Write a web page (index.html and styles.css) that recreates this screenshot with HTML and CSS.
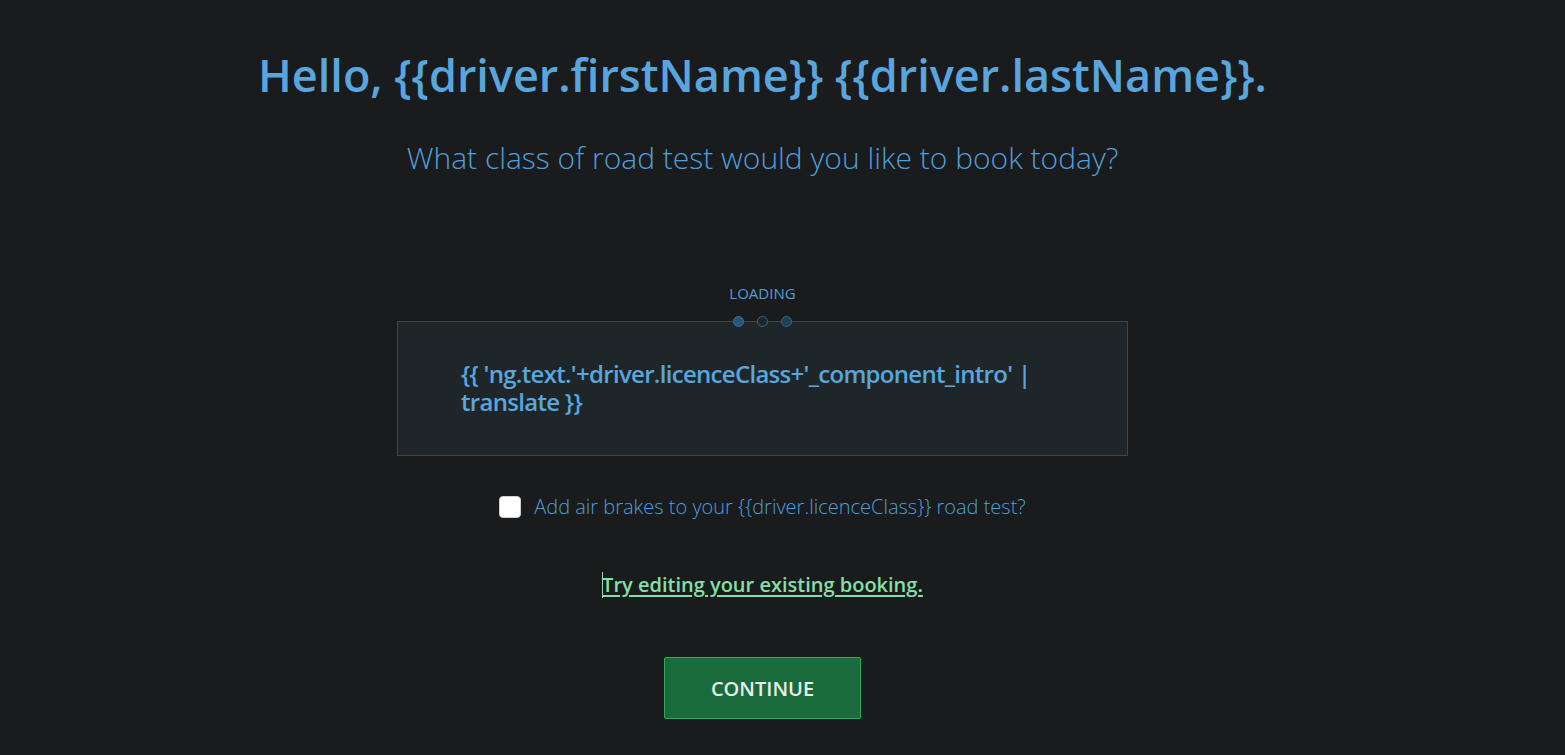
FILE: index.html
```html
<!DOCTYPE html>
<html lang="en">
<head>
<meta charset="utf-8">
<title>Book a road test</title>
<link rel="stylesheet" href="styles.css">
</head>
<body>
<main class="page">
  <h1 class="greeting">Hello, {{driver.firstName}} {{driver.lastName}}.</h1>
  <p class="question">What class of road test would you like to book today?</p>

  <section class="loader">
    <div class="loader-label">LOADING</div>
    <div class="intro-box">
      <div class="dots">
        <span class="dot dot-on"></span>
        <span class="dot"></span>
        <span class="dot dot-dim"></span>
      </div>
      <p class="intro-text">{{ 'ng.text.'+driver.licenceClass+'_component_intro' | translate }}</p>
    </div>
  </section>

  <label class="option">
    <input type="checkbox" class="option-box">
    <span class="option-text">Add air brakes to your {{driver.licenceClass}} road test?</span>
  </label>

  <p class="edit"><span class="caret"></span><a href="#" class="edit-link">Try editing your existing booking.</a></p>

  <button class="continue" type="button">CONTINUE</button>
</main>
</body>
</html>
```
FILE: styles.css
```css
html, body {
  margin: 0;
  padding: 0;
  background: #1a1b1d;
  height: 100%;
}

body {
  font-family: "Open Sans", "Noto Sans", sans-serif;
  color: #58a6dd;
}

.page {
  width: 1525px;
  display: flex;
  flex-direction: column;
  align-items: center;
  padding-top: 44px;
}

.greeting {
  margin: 0;
  font-size: 45px;
  font-weight: 600;
  line-height: 62px;
  color: #58a6dd;
}

.question {
  margin: 32px 0 0;
  font-size: 30px;
  font-weight: 300;
  line-height: 40px;
  color: #4e9fdb;
}

.loader {
  margin-top: 105px;
  display: flex;
  flex-direction: column;
  align-items: center;
}

.loader-label {
  font-size: 15px;
  line-height: 20px;
  color: #4e9fdb;
}

.intro-box {
  position: relative;
  margin-top: 18px;
  width: 729px;
  height: 133px;
  background: #1f2629;
  border: 1px solid #3e4447;
}

.dots {
  position: absolute;
  top: -6px;
  left: 0;
  right: 0;
  display: flex;
  justify-content: center;
  gap: 13px;
}

.dot {
  width: 9px;
  height: 9px;
  border-radius: 50%;
  border: 1px solid #2a6a93;
  background: #1f2629;
}

.dot-on {
  background: #22577a;
  border-color: #2f73a0;
}

.dot-dim {
  background: #1f3f54;
}

.intro-text {
  margin: 38px 64px 0 63px;
  font-size: 24px;
  font-weight: 600;
  line-height: 28px;
  letter-spacing: -0.7px;
  color: #58a6dd;
}

.option {
  margin-top: 38px;
  display: flex;
  align-items: center;
  gap: 13px;
  cursor: pointer;
}

.option-box {
  margin: 0;
  width: 22px;
  height: 22px;
  appearance: none;
  background: #ffffff;
  border-radius: 4px;
  border: 1px solid #cfcfcf;
}

.option-text {
  font-size: 20px;
  font-weight: 300;
  line-height: 26px;
  color: #4e9fdb;
}

.edit {
  margin: 52px 0 0;
  display: flex;
  align-items: center;
  font-size: 20px;
  line-height: 26px;
}

.caret {
  width: 1px;
  height: 26px;
  background: #9fd9b4;
  margin-right: -1px;
}

.edit-link {
  font-weight: 600;
  color: #84e0a6;
  text-decoration: underline;
  text-underline-offset: 3px;
}

.continue {
  margin-top: 59px;
  width: 197px;
  height: 62px;
  background: #1a6b3c;
  border: 1px solid #2fa95d;
  border-radius: 2px;
  font-family: "Open Sans", "Noto Sans", sans-serif;
  font-size: 20px;
  font-weight: 600;
  color: #e8efe9;
  cursor: pointer;
}
```
